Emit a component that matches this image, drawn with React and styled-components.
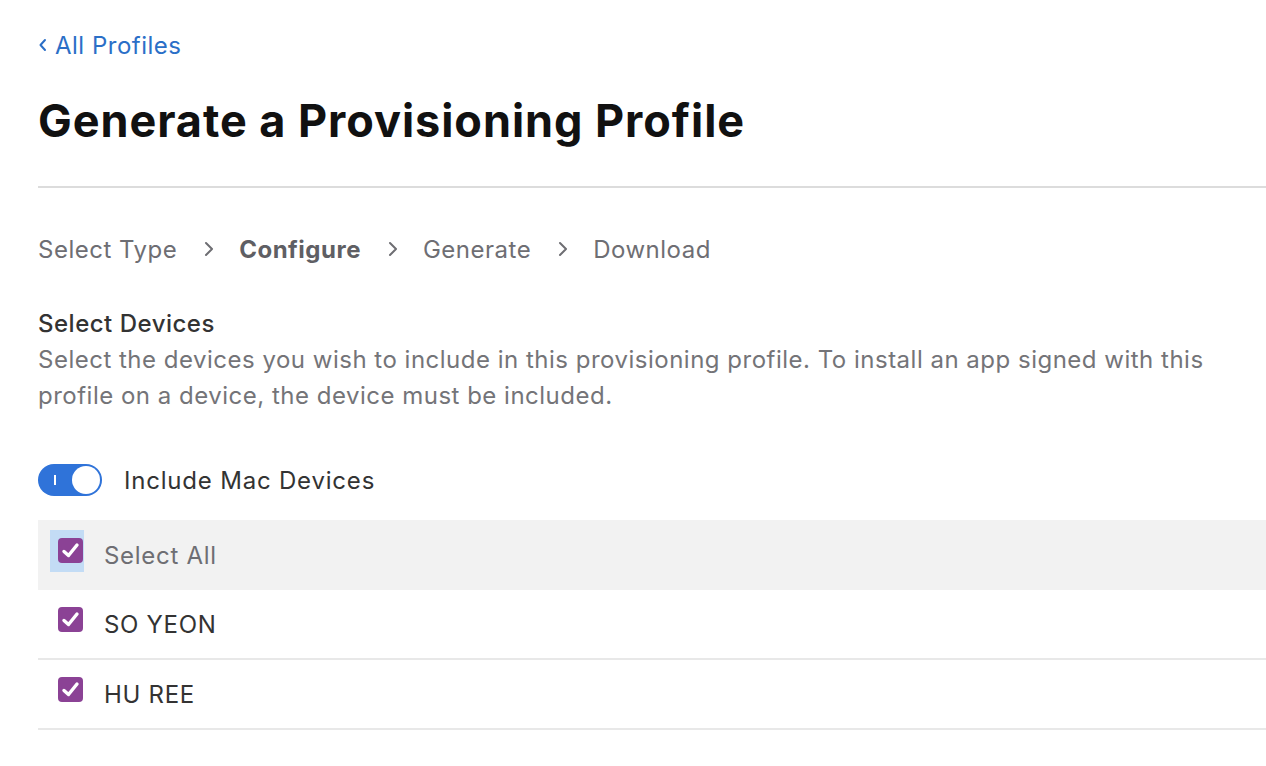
import React from "react";
import styled, { createGlobalStyle } from "styled-components";

const Global = createGlobalStyle`
  html, body { margin: 0; padding: 0; background: #fff; }
  body { font-family: Inter, "Noto Sans", "Liberation Sans", sans-serif; -webkit-font-smoothing: antialiased; letter-spacing: 0.5px; }
`;

const Page = styled.div`
  padding: 28px 0 0 38px;
  width: 1228px;
  box-sizing: content-box;
`;

const BackLink = styled.a`
  display: flex;
  align-items: center;
  gap: 8px;
  height: 34px;
  font-size: 24px;
  color: #2b6fc7;
  text-decoration: none;
`;

const Title = styled.h1`
  margin: 32px 0 0;
  font-size: 45px;
  font-weight: 700;
  line-height: 54px;
  color: #111;
  letter-spacing: 0.95px;
`;

const Rule = styled.div`
  margin-top: 38px;
  height: 2px;
  background: #dcdcdc;
`;

const Steps = styled.nav`
  display: flex;
  align-items: center;
  height: 36px;
  margin-top: 43px;
  font-size: 24px;
  color: #6e6e73;
`;

const Step = styled.span`
  font-weight: ${(p) => (p.$active ? 700 : 400)};
  color: ${(p) => (p.$active ? "#5f5f64" : "#6e6e73")};
`;

const Chevron = styled.svg`
  width: 10px;
  height: 16px;
  margin: 0 25px 0 27px;
`;

const SectionTitle = styled.h2`
  margin: 39px 0 0;
  font-size: 24px;
  font-weight: 500;
  line-height: 36px;
  color: #333;
`;

const Description = styled.p`
  margin: 0;
  font-size: 24px;
  line-height: 36px;
  color: #747478;
  max-width: 1200px;
`;

const ToggleRow = styled.label`
  display: flex;
  align-items: center;
  gap: 22px;
  margin-top: 50px;
  font-size: 24px;
  letter-spacing: 0.8px;
  color: #333;
`;

const Toggle = styled.span`
  position: relative;
  display: inline-flex;
  align-items: center;
  width: 64px;
  height: 32px;
  border-radius: 16px;
  background: #2f73d9;
  box-sizing: border-box;
`;

const ToggleMark = styled.span`
  position: absolute;
  left: 16px;
  top: 11px;
  width: 2px;
  height: 10px;
  background: #fff;
`;

const Knob = styled.span`
  position: absolute;
  right: 2px;
  top: 2px;
  width: 28px;
  height: 28px;
  border-radius: 50%;
  background: #fff;
`;

const List = styled.div`
  margin-top: 24px;
`;

const Row = styled.div`
  display: flex;
  align-items: center;
  height: 70px;
  padding-left: 20px;
  gap: 21px;
  font-size: 24px;
  letter-spacing: 0.7px;
  color: ${(p) => (p.$muted ? "#6e6e73" : "#333")};
  background: ${(p) => (p.$shaded ? "#f2f2f2" : "transparent")};
  border-bottom: ${(p) => (p.$shaded ? "none" : "2px solid #e8e8e8")};
  box-sizing: border-box;
`;

const BoxWrap = styled.span`
  position: relative;
  display: inline-flex;
  width: 25px;
  height: 25px;
  margin-bottom: 10px;
`;

const Focus = styled.span`
  position: absolute;
  left: -8px;
  top: -8px;
  width: 34px;
  height: 42px;
  background: #c3dcf5;
`;

const Box = styled.span`
  position: relative;
  display: inline-flex;
  align-items: center;
  justify-content: center;
  width: 25px;
  height: 25px;
  border-radius: 4px;
  background: #8b4295;
`;

function Check({ focused }) {
  return (
    <BoxWrap>
      {focused && <Focus />}
      <Box>
        <svg width="19" height="17" viewBox="0 0 19 17">
          <path d="M3 9.5 L7.5 13.5 L16 3" fill="none" stroke="#fff" strokeWidth="3.4" strokeLinecap="round" strokeLinejoin="round" />
        </svg>
      </Box>
    </BoxWrap>
  );
}

function Arrow() {
  return (
    <Chevron viewBox="0 0 10 16">
      <path d="M2 2 L8 8 L2 14" fill="none" stroke="#6e6e73" strokeWidth="2" strokeLinecap="round" strokeLinejoin="round" />
    </Chevron>
  );
}

export default function App() {
  return (
    <Page>
      <Global />
      <BackLink href="#">
        <svg width="9" height="14" viewBox="0 0 9 14">
          <path d="M7 2 L2.5 7 L7 12" fill="none" stroke="#2b6fc7" strokeWidth="2" strokeLinecap="round" strokeLinejoin="round" />
        </svg>
        All Profiles
      </BackLink>
      <Title>Generate a Provisioning Profile</Title>
      <Rule />
      <Steps>
        <Step>Select Type</Step>
        <Arrow />
        <Step $active>Configure</Step>
        <Arrow />
        <Step>Generate</Step>
        <Arrow />
        <Step>Download</Step>
      </Steps>
      <SectionTitle>Select Devices</SectionTitle>
      <Description>
        Select the devices you wish to include in this provisioning profile. To install an app signed with this profile on a device, the device must be included.
      </Description>
      <ToggleRow>
        <Toggle>
          <ToggleMark />
          <Knob />
        </Toggle>
        Include Mac Devices
      </ToggleRow>
      <List>
        <Row $shaded $muted>
          <Check focused />
          Select All
        </Row>
        <Row>
          <Check />
          SO YEON
        </Row>
        <Row>
          <Check />
          HU REE
        </Row>
      </List>
    </Page>
  );
}
